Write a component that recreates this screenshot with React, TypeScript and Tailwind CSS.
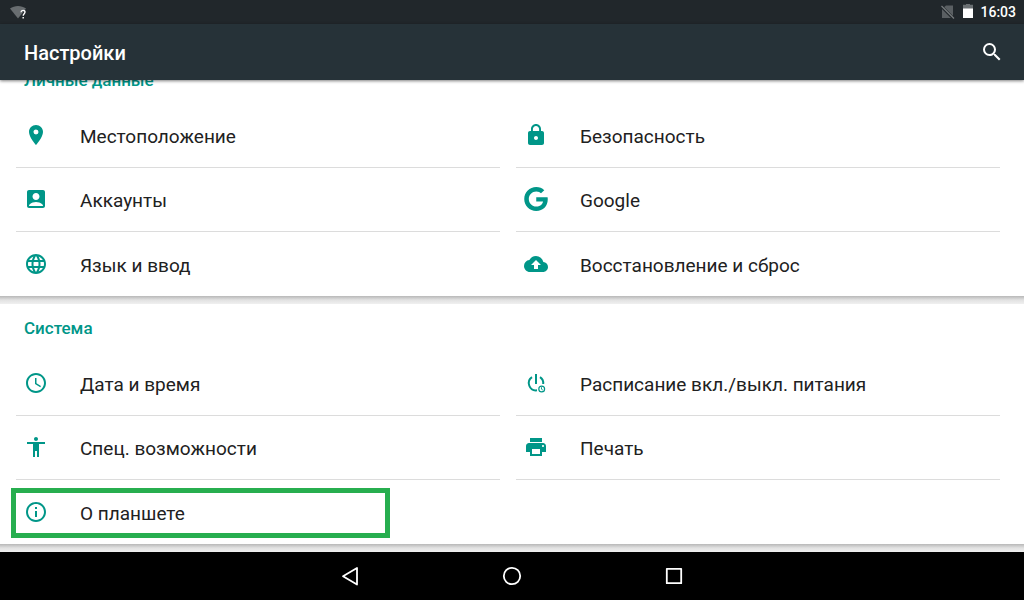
import React from "react";
import {
  MdAccessibility,
  MdAccessTime,
  MdAccountBox,
  MdBackup,
  MdInfoOutline,
  MdLanguage,
  MdLocationOn,
  MdLock,
  MdPrint,
  MdSearch,
} from "react-icons/md";

type IconProps = { className?: string };

type Item = {
  label: string;
  icon: React.ComponentType<IconProps>;
  highlighted?: boolean;
};

function GoogleIcon({ className }: IconProps) {
  return (
    <svg className={className} viewBox="0 0 24 24" fill="currentColor" aria-hidden="true">
      <path d="M12.24 10.285V14.4h6.806c-.275 1.765-2.056 5.174-6.806 5.174-4.095 0-7.439-3.389-7.439-7.574s3.345-7.574 7.439-7.574c2.33 0 3.891.989 4.785 1.849l3.254-3.138C18.189 1.186 15.479 0 12.24 0c-6.635 0-12 5.365-12 12s5.365 12 12 12c6.926 0 11.52-4.869 11.52-11.726 0-.788-.085-1.39-.189-1.989H12.24z" />
    </svg>
  );
}

function PowerScheduleIcon({ className }: IconProps) {
  return (
    <svg className={className} viewBox="0 0 24 24" fill="none" stroke="currentColor" aria-hidden="true">
      <path d="M12 3v10" strokeWidth="2" />
      <path d="M8 6.200A7.200 7.200 0 0 0 13 19.300" strokeWidth="2" />
      <path d="M16 6.200A7.200 7.200 0 0 1 19.200 13" strokeWidth="2" />
      <circle cx="17.700" cy="18" r="2.900" strokeWidth="1.200" />
      <path d="M17.500 16.200v2l1.300 .8" strokeWidth=".9" />
    </svg>
  );
}

const personalItems: Item[] = [
  { label: "Местоположение", icon: MdLocationOn },
  { label: "Безопасность", icon: MdLock },
  { label: "Аккаунты", icon: MdAccountBox },
  { label: "Google", icon: GoogleIcon },
  { label: "Язык и ввод", icon: MdLanguage },
  { label: "Восстановление и сброс", icon: MdBackup },
];

const systemItems: Item[] = [
  { label: "Дата и время", icon: MdAccessTime },
  { label: "Расписание вкл./выкл. питания", icon: PowerScheduleIcon },
  { label: "Спец. возможности", icon: MdAccessibility },
  { label: "Печать", icon: MdPrint },
  { label: "О планшете", icon: MdInfoOutline, highlighted: true },
];

function StatusBar() {
  return (
    <div className="flex h-6 shrink-0 items-center justify-between bg-[#21272b] px-2 text-white">
      <svg className="h-5 w-5" viewBox="0 0 20 20" aria-hidden="true">
        <path d="M2 6.500C6.500 3 13.500 3 18 6.500L10 16.500z" fill="#686d70" />
        <path
          d="M13 10.300c.1-1.300.9-1.900 2-1.900 1.200 0 2 .7 2 1.700 0 1.500-1.800 1.700-1.800 3.700M15.200 14.900v1.500"
          fill="none"
          stroke="#fff"
          strokeWidth="1.400"
        />
      </svg>
      <div className="flex items-center gap-1.5">
        <svg className="h-4 w-4" viewBox="0 0 16 16" aria-hidden="true">
          <path d="M6 1.500h7V14H2V5z" fill="#5a5f62" />
          <path d="M1.500 2.500L14 15" stroke="#21272b" strokeWidth="3" />
          <path d="M1.500 2L14 14.500" stroke="#777b7e" strokeWidth="1.200" />
        </svg>
        <svg className="h-4 w-3" viewBox="0 0 12 16" aria-hidden="true">
          <path d="M4 -.5h4V.8h3V5H1V.8h3z" fill="#6a6f72" />
          <path d="M1 4.500h10V14H1z" fill="#fff" />
        </svg>
        <span className="text-sm font-medium">16:03</span>
      </div>
    </div>
  );
}

function SettingsRow({ item, divided }: { item: Item; divided: boolean }) {
  const Icon = item.icon;
  return (
    <li className={divided ? "relative h-16 border-b border-[#dcdcdc] pb-px" : "relative h-16"}>
      <a href="#" className="flex h-full items-center gap-8 pl-2">
        <Icon className="h-6 w-6 shrink-0 text-[#009688]" />
        <span className="pt-[3px] text-[19px] leading-7 text-[#212121]">{item.label}</span>
      </a>
      {item.highlighted && (
        <div className="pointer-events-none absolute top-2 -left-[5px] h-[50px] w-[379px] border-5 border-[#27ae4f]" />
      )}
    </li>
  );
}

function SettingsSection({ title, items }: { title: string; items: Item[] }) {
  // The last line of the two-column grid has no divider
  const lastRow = Math.ceil(items.length / 2) - 1;

  return (
    <section className="shrink-0">
      <div className="bg-white">
        <h2 className="flex h-12 items-center pt-[2px] pl-6 text-[17px] font-medium text-[#009688]">{title}</h2>
        <ul className="grid grid-cols-2 gap-x-4 pr-6 pl-4">
          {items.map((item, index) => (
            <SettingsRow key={item.label} item={item} divided={Math.floor(index / 2) < lastRow} />
          ))}
        </ul>
      </div>
      <div className="h-2 bg-linear-to-b from-[#b8b8b8] via-[#e2e2e2] to-[#f0f0f0]" />
    </section>
  );
}

function NavigationBar() {
  return (
    <nav className="flex h-12 shrink-0 items-center justify-center gap-[138px] bg-black text-white">
      <button type="button" aria-label="Назад">
        <svg className="h-6 w-6" viewBox="0 0 24 24" fill="none" stroke="currentColor" strokeWidth="1.800" strokeLinejoin="round">
          <path d="M19 4v16.500L5 12.200z" />
        </svg>
      </button>
      <button type="button" aria-label="Домой">
        <svg className="h-6 w-6" viewBox="0 0 24 24" fill="none" stroke="currentColor" strokeWidth="1.800">
          <circle cx="12" cy="12" r="8.200" />
        </svg>
      </button>
      <button type="button" aria-label="Обзор">
        <svg className="h-6 w-6" viewBox="0 0 24 24" fill="none" stroke="currentColor" strokeWidth="1.800" strokeLinejoin="round">
          <path d="M4.800 4.800h14.400v14.400H4.800z" />
        </svg>
      </button>
    </nav>
  );
}

export default function App() {
  return (
    <div className="flex h-screen flex-col overflow-hidden bg-[#ececec] font-['Roboto','Noto_Sans',sans-serif]">
      <StatusBar />
      <header className="z-10 flex h-14 shrink-0 items-center justify-between bg-[#263238] pr-5 pl-6 text-white shadow-[0_1px_3px_rgba(0,0,0,0.5)]">
        <h1 className="pt-[2px] text-xl font-medium">Настройки</h1>
        <button type="button" aria-label="Поиск">
          <MdSearch className="h-6 w-6" />
        </button>
      </header>
      {/* Scrolled to the end of the list */}
      <main className="flex min-h-0 flex-1 flex-col justify-end overflow-hidden">
        <SettingsSection title="Личные данные" items={personalItems} />
        <SettingsSection title="Система" items={systemItems} />
      </main>
      <NavigationBar />
    </div>
  );
}
